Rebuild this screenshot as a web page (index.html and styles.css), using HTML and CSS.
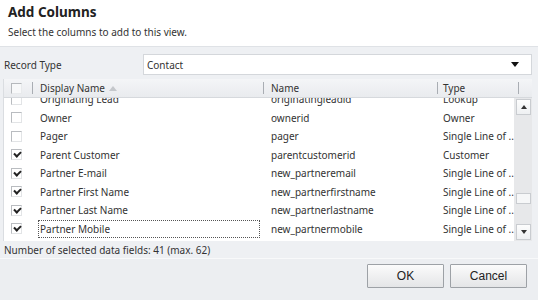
FILE: index.html
```html
<!DOCTYPE html>
<html>
<head>
<meta charset="utf-8">
<link rel="stylesheet" href="styles.css">
</head>
<body>
<div class="dialog">
  <div class="top">
    <div class="title">Add Columns</div>
    <div class="subtitle">Select the columns to add to this view.</div>
  </div>
  <div class="main">
    <div class="record">
      <div class="record-label">Record Type</div>
      <div class="select"><span>Contact</span><span class="caret"></span></div>
    </div>
    <div class="grid">
      <div class="head">
        <div class="hcell hcheck"><span class="cb"></span></div>
        <div class="hcell hdisp">Display Name <span class="sort"></span></div>
        <div class="hcell hname">Name</div>
        <div class="hcell htype">Type</div>
        <div class="hcell hend"></div>
      </div>
      <div class="body">
        <div class="rows">
          <div class="rows-inner">
            <div class="row"><span class="c1"><span class="cb"></span></span><span class="c2">Originating Lead</span><span class="c3">originatingleadid</span><span class="c4">Lookup</span></div>
            <div class="row"><span class="c1"><span class="cb"></span></span><span class="c2">Owner</span><span class="c3">ownerid</span><span class="c4">Owner</span></div>
            <div class="row"><span class="c1"><span class="cb"></span></span><span class="c2">Pager</span><span class="c3">pager</span><span class="c4">Single Line of ...</span></div>
            <div class="row"><span class="c1"><span class="cb on"></span></span><span class="c2">Parent Customer</span><span class="c3">parentcustomerid</span><span class="c4">Customer</span></div>
            <div class="row"><span class="c1"><span class="cb on"></span></span><span class="c2">Partner E-mail</span><span class="c3">new_partneremail</span><span class="c4">Single Line of ...</span></div>
            <div class="row"><span class="c1"><span class="cb on"></span></span><span class="c2">Partner First Name</span><span class="c3">new_partnerfirstname</span><span class="c4">Single Line of ...</span></div>
            <div class="row"><span class="c1"><span class="cb on"></span></span><span class="c2">Partner Last Name</span><span class="c3">new_partnerlastname</span><span class="c4">Single Line of ...</span></div>
            <div class="row"><span class="c1"><span class="cb on"></span></span><span class="c2"><span class="focus">Partner Mobile</span></span><span class="c3">new_partnermobile</span><span class="c4">Single Line of ...</span></div>
          </div>
        </div>
        <div class="scroll">
          <div class="sbtn"><span class="up"></span></div>
          <div class="track1"></div>
          <div class="thumb"></div>
          <div class="track2"></div>
          <div class="sbtn"><span class="down"></span></div>
        </div>
      </div>
    </div>
    <div class="status">Number of selected data fields: 41 (max. 62)</div>
  </div>
  <div class="foot">
    <button class="btn">OK</button>
    <button class="btn">Cancel</button>
  </div>
</div>
</body>
</html>
```

FILE: styles.css
```css
* { box-sizing: border-box; }
html, body { margin: 0; padding: 0; }
body {
  width: 538px;
  height: 300px;
  overflow: hidden;
  background: #eceef1;
  font-family: "Noto Sans", "Open Sans", sans-serif;
  font-size: 10px;
  color: #333;
}
.dialog { display: flex; flex-direction: column; height: 300px; }
.top {
  background: #fff;
  height: 47px;
  padding: 4px 8px 0;
  border-bottom: 1px solid #dfe2e6;
}
.title { font-weight: bold; font-size: 13.5px; color: #222; line-height: 17px; }
.subtitle { line-height: 14px; margin-top: 4px; color: #333; }
.main {
  background: #eef0f3;
  padding: 7px 6px 0 3px;
  height: 212px;
  border-bottom: 1px solid #f8f9fa;
}
.record { display: flex; align-items: center; height: 21px; }
.record-label { width: 140px; padding-left: 1px; }
.select {
  flex: 1;
  height: 21px;
  background: #fff;
  border: 1px solid #d4d7db;
  display: flex;
  align-items: center;
  justify-content: space-between;
  padding: 0 12px 0 3px;
}
.caret {
  width: 0; height: 0;
  border-left: 4px solid transparent;
  border-right: 4px solid transparent;
  border-top: 5px solid #111;
}
.grid { margin-top: 4px; border-left: 1px solid #dadde1; }
.head {
  display: flex;
  height: 19px;
  background: linear-gradient(#f4f5f7, #e9ebee);
  border-bottom: 1px solid #d6d9dd;
}
.hcell { display: flex; align-items: center; position: relative; flex-shrink: 0; }
.hcell::after {
  content: "";
  position: absolute;
  right: 0; top: 3px; bottom: 3px;
  width: 1px;
  background: #a9adb3;
}
.hcheck { width: 29px; padding-left: 7px; }
.hdisp { width: 231px; padding-left: 7px; }
.hname { width: 174px; padding-left: 7px; }
.htype { width: 81px; padding-left: 5px; }
.hend { flex: 1; }
.hend::after { display: none; }
.sort {
  display: inline-block;
  margin-left: 4px;
  width: 0; height: 0;
  border-left: 4px solid transparent;
  border-right: 4px solid transparent;
  border-bottom: 5px solid #c4c7cb;
}
.body { display: flex; height: 143px; }
.rows { flex: 1; min-width: 0; background: #fff; overflow: hidden; }
.rows-inner { margin-top: -8px; }
.row {
  display: flex;
  height: 18.5px;
  align-items: center;
}
.c1 { width: 29px; flex-shrink: 0; padding-left: 7px; display: flex; }
.c2 { width: 231px; flex-shrink: 0; padding-left: 7px; }
.c3 { width: 174px; flex-shrink: 0; padding-left: 7px; }
.c4 { flex: 1; min-width: 0; padding-left: 5px; white-space: nowrap; }
.c2 .focus {
  display: block;
  outline: 1px dotted #555;
  height: 16px;
  line-height: 16px;
  margin-left: -1px;
  width: 220px;
  padding-left: 1px;
}
.cb {
  width: 11px; height: 11px;
  border: 1px solid #b9bcc0;
  border-right-color: #e2e4e6;
  border-bottom-color: #e2e4e6;
  background: #fff;
  position: relative;
  display: inline-block;
}
.head .cb { border-color: #b5b8bc #e8eaec #e8eaec #b5b8bc; background: #f7f8f9; }
.cb.on::after {
  content: "";
  position: absolute;
  left: 2px; top: 1px;
  width: 5px; height: 3px;
  border-left: 2px solid #222;
  border-bottom: 2px solid #222;
  transform: rotate(-45deg);
}
.scroll {
  width: 18px;
  flex-shrink: 0;
  background: #e7e8ea;
  display: flex;
  flex-direction: column;
  padding: 1px 1px 1px 2px;
}
.sbtn {
  height: 16px;
  background: linear-gradient(#fdfdfd, #eef0f2);
  border: 1px solid #c9ccd0;
  display: flex;
  align-items: center;
  justify-content: center;
}
.up {
  width: 0; height: 0;
  border-left: 3px solid transparent;
  border-right: 3px solid transparent;
  border-bottom: 4px solid #333;
}
.down {
  width: 0; height: 0;
  border-left: 3px solid transparent;
  border-right: 3px solid transparent;
  border-top: 4px solid #333;
}
.track1 { height: 78px; }
.thumb { height: 11px; background: #f6f7f8; border: 1px solid #c9ccd0; }
.track2 { flex: 1; }
.status { padding: 3px 1px; line-height: 13px; }
.foot {
  flex: 1;
  display: flex;
  justify-content: flex-end;
  align-items: flex-start;
  gap: 6px;
  padding: 5px 11px 0 0;
  background: #eceef1;
}
.btn {
  width: 77px;
  height: 24px;
  font-family: "Liberation Sans", Arial, sans-serif;
  font-size: 12px;
  color: #222;
  background: linear-gradient(#fbfbfb, #e4e5e7);
  border: 1px solid #9da1a6;
  border-radius: 1px;
  padding: 0;
}
```
